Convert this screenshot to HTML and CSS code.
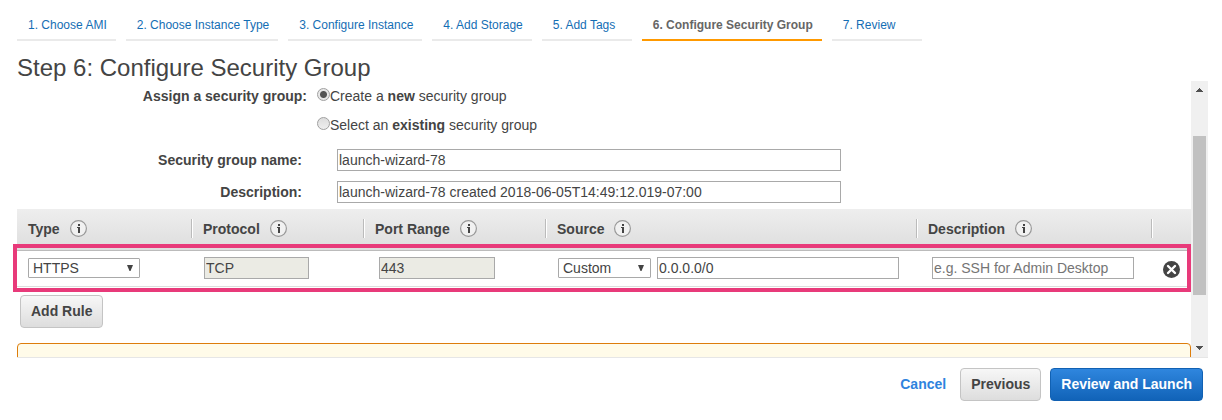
FILE: index.html
```html
<!DOCTYPE html>
<html lang="en">
<head>
<meta charset="utf-8">
<title>Step 6: Configure Security Group</title>
<link rel="stylesheet" href="styles.css">
</head>
<body>
<svg class="sprite" aria-hidden="true">
  <symbol id="info" viewBox="0 0 17 17">
    <circle cx="8.500" cy="8.500" r="7.900" fill="#f1f1f1" stroke="#999" stroke-width="1.200"/>
    <path d="M8 4h2v2H8zM7 7h3v6H8V8H7z" fill="#444"/>
  </symbol>
  <symbol id="remove" viewBox="0 0 17 17">
    <circle cx="8.500" cy="8.500" r="8.500" fill="#444"/>
    <path d="M5 5l7 7M12 5l-7 7" stroke="#fff" stroke-width="2.400" stroke-linecap="round"/>
  </symbol>
  <symbol id="arrow" viewBox="0 0 6 6"><path d="M0 0h6L3.500 6h-1z" fill="#444"/></symbol>
  <symbol id="up" viewBox="0 0 7 4"><path d="M0 4V3h1V2h1V1h1V0h1v1h1v1h1v1h1v1z" fill="#505050"/></symbol>
  <symbol id="down" viewBox="0 0 7 4"><path d="M0 0v1h1v1h1v1h1v1h1V3h1V2h1V1h1V0z" fill="#505050"/></symbol>
</svg>
<nav class="steps" aria-label="Wizard steps">
  <a class="step" href="#">1. Choose AMI</a>
  <a class="step" href="#">2. Choose Instance Type</a>
  <a class="step" href="#">3. Configure Instance</a>
  <a class="step" href="#">4. Add Storage</a>
  <a class="step" href="#">5. Add Tags</a>
  <a class="step current" href="#" aria-current="step">6. Configure Security Group</a>
  <a class="step" href="#">7. Review</a>
</nav>
<h1 class="title">Step 6: Configure Security Group</h1>
<main class="panel">
  <div class="content">
    <div class="form">
      <div class="row choices" role="radiogroup" aria-labelledby="assign">
        <span class="label" id="assign">Assign a security group:</span>
        <div class="radios">
          <label class="choice"><input type="radio" name="group" checked><span>Create a <b>new</b> security group</span></label>
          <label class="choice"><input type="radio" name="group"><span>Select an <b>existing</b> security group</span></label>
        </div>
      </div>
      <div class="row">
        <label class="label" for="name">Security group name:</label>
        <input class="text" id="name" type="text" value="launch-wizard-78">
      </div>
      <div class="row">
        <label class="label" for="desc">Description:</label>
        <input class="text" id="desc" type="text" value="launch-wizard-78 created 2018-06-05T14:49:12.019-07:00">
      </div>
    </div>
    <table class="rules">
      <colgroup><col class="c-type"><col class="c-protocol"><col class="c-port"><col><col class="c-desc"><col class="c-remove"></colgroup>
      <thead>
        <tr>
          <th scope="col"><span class="head">Type <svg class="icon"><use href="#info"/></svg></span></th>
          <th scope="col"><span class="head">Protocol <svg class="icon"><use href="#info"/></svg></span></th>
          <th scope="col"><span class="head">Port Range <svg class="icon"><use href="#info"/></svg></span></th>
          <th scope="col"><span class="head">Source <svg class="icon"><use href="#info"/></svg></span></th>
          <th scope="col"><span class="head">Description <svg class="icon"><use href="#info"/></svg></span></th>
          <td><span class="head"></span></td>
        </tr>
      </thead>
      <tbody>
        <tr class="highlight">
          <td><span class="select type"><select aria-label="Type"><option>HTTPS</option></select><svg><use href="#arrow"/></svg></span></td>
          <td><input class="text protocol" type="text" value="TCP" aria-label="Protocol" disabled></td>
          <td class="wide"><input class="text port" type="text" value="443" aria-label="Port Range" disabled></td>
          <td><div class="source"><span class="select"><select aria-label="Source"><option>Custom</option></select><svg><use href="#arrow"/></svg></span><input class="text" type="text" value="0.0.0.0/0" aria-label="Source address"></div></td>
          <td class="wide"><input class="text" type="text" placeholder="e.g. SSH for Admin Desktop" aria-label="Description"></td>
          <td><button class="remove" type="button" aria-label="Remove rule"><svg class="icon"><use href="#remove"/></svg></button></td>
        </tr>
      </tbody>
    </table>
    <button class="btn add" type="button">Add Rule</button>
    <div class="warning"></div>
  </div>
  <div class="scrollbar" aria-hidden="true">
    <svg><use href="#up"/></svg>
    <div class="track"><div class="thumb"></div></div>
    <svg><use href="#down"/></svg>
  </div>
</main>
<footer class="actions">
  <a class="cancel" href="#">Cancel</a>
  <button class="btn" type="button">Previous</button>
  <button class="btn primary" type="button">Review and Launch</button>
</footer>
</body>
</html>
```
FILE: styles.css
```css
* {
  box-sizing: border-box;
}

body {
  display: flex;
  flex-direction: column;
  height: 100vh;
  margin: 0;
  background: #fff;
  color: #444;
  font: 14px/20px "Liberation Sans", Arial, sans-serif;
}

input,
select,
button {
  margin: 0;
  color: inherit;
  font: inherit;
}

a {
  text-decoration: none;
}

.sprite {
  position: absolute;
  width: 0;
  height: 0;
}

.icon {
  display: block;
  flex: none;
  width: 17px;
  height: 17px;
}

.steps {
  display: flex;
  gap: 10px;
  padding: 15px 17px 0;
}

.step {
  min-width: 90px;
  padding: 0 9px 4px 11px;
  border-bottom: 2px solid #eaeaea;
  color: #146eb4;
  font-size: 12px;
  white-space: nowrap;
}

.step.current {
  border-color: #f90;
  color: #666;
  font-weight: bold;
}

.title {
  margin: 0;
  padding: 13px 17px 0;
  font-size: 24px;
  font-weight: normal;
  line-height: 27px;
}

.panel {
  display: flex;
  flex: 1;
  min-height: 0;
  margin-right: 14px;
  margin-left: 17px;
  border-bottom: 1px solid #e6e6e6;
}

.content {
  flex: 1;
  min-width: 0;
  clip-path: inset(0 0 0 -4px);
  overflow: visible;
}

.form {
  display: flex;
  flex-direction: column;
  gap: 10px;
  padding: 5px 0 6px;
}

.row {
  display: flex;
  align-items: center;
  gap: 35px;
}

.row .label {
  width: 285px;
  font-weight: bold;
  text-align: right;
}

.row .text {
  width: 504px;
}

.choices {
  align-items: flex-start;
  gap: 10px;
  padding-bottom: 4px;
}

.choices .label {
  width: 290px;
}

.radios {
  display: flex;
  flex-direction: column;
  gap: 9px;
}

.choice {
  display: flex;
}

.choice input {
  width: 13px;
  height: 13px;
  margin-top: 2px;
  border: 1px solid #a0a0a0;
  border-radius: 50%;
  background: linear-gradient(#ddd, #eee);
  appearance: none;
}

.choice input:checked {
  background: radial-gradient(circle, #555 3px, #e8e8e8 4px);
}

.text {
  display: block;
  width: 100%;
  height: 22px;
  padding: 0 1px;
  border: 1px solid #a9a9a9;
  border-radius: 0;
  background: #fff;
}

.text:disabled {
  background: #ebebe4;
}

.text::placeholder {
  color: #757575;
}

.rules {
  width: 100%;
  border-collapse: separate;
  border-spacing: 0;
  table-layout: fixed;
}

.c-type { width: 174px; }
.c-protocol { width: 172px; }
.c-port { width: 182px; }
.c-desc { width: 235px; }
.c-remove { width: 40px; }

thead tr {
  background: linear-gradient(#eee, #ddd);
}

thead th,
thead td {
  padding: 10px 0 12px;
  border-bottom: 1px solid #bbb;
  text-align: left;
}

.head {
  display: flex;
  align-items: center;
  gap: 10px;
  height: 19px;
  padding-left: 11px;
  border-left: 1px solid #bbb;
  box-shadow: inset 1px 0 #fff;
}

th:first-child .head {
  padding-left: 10px;
  border-color: transparent;
  box-shadow: none;
}

tbody td {
  padding: 6px 17px 7px 13px;
  border-bottom: 1px solid #ddd;
}

tbody td:first-child {
  padding-left: 11px;
}

tbody .wide {
  padding-left: 16px;
}

tbody td:last-child {
  padding: 2px 0 0 12px;
}

.highlight {
  position: relative;
}

.highlight td:first-child::after {
  position: absolute;
  inset: -7px 0 -5px -4px;
  border: 4px solid #e83a7a;
  content: "";
  pointer-events: none;
}

.select {
  display: flex;
  align-items: center;
  position: relative;
  flex: none;
  width: 93px;
}

.select.type {
  width: 112px;
}

.select select {
  width: 100%;
  height: 20px;
  padding: 0 4px;
  border: 1px solid #a9a9a9;
  border-radius: 1px;
  background: #fff;
  line-height: 18px;
  appearance: none;
}

.select svg {
  position: absolute;
  right: 7px;
  width: 6px;
  height: 6px;
  pointer-events: none;
}

.protocol {
  width: 105px;
}

.port {
  width: 116px;
}

.source {
  display: flex;
  align-items: center;
  gap: 6px;
}

.remove {
  display: block;
  padding: 0;
  border: 0;
  border-radius: 50%;
  background: none;
}

.btn {
  height: 33px;
  padding: 0 10px 2px;
  border: 1px solid #c4c4c4;
  border-radius: 4px;
  background: linear-gradient(#f7f7f7, #ddd);
  font-weight: bold;
  white-space: nowrap;
}

.add {
  display: block;
  margin: 8px 0 15px 3px;
}

.warning {
  height: 60px;
  border: 1px solid #dd7d0c;
  border-radius: 4px;
  background: #fffbe9;
}

.scrollbar {
  display: flex;
  flex-direction: column;
  align-items: center;
  width: 17px;
  padding: 7px 0;
  background: #f0f0f0;
}

.scrollbar svg {
  width: 7px;
  height: 4px;
}

.track {
  flex: 1;
  padding-top: 44px;
}

.thumb {
  width: 13px;
  height: 159px;
  background: #c1c1c1;
}

.actions {
  display: flex;
  align-items: center;
  justify-content: flex-end;
  gap: 9px;
  padding: 10px 19px 19px;
}

.cancel {
  margin-right: 5px;
  padding-bottom: 2px;
  color: #2e83de;
  font-weight: bold;
}

.primary {
  border-color: #1161b3;
  background: linear-gradient(#2f86de, #1163b8);
  color: #fff;
}
```
